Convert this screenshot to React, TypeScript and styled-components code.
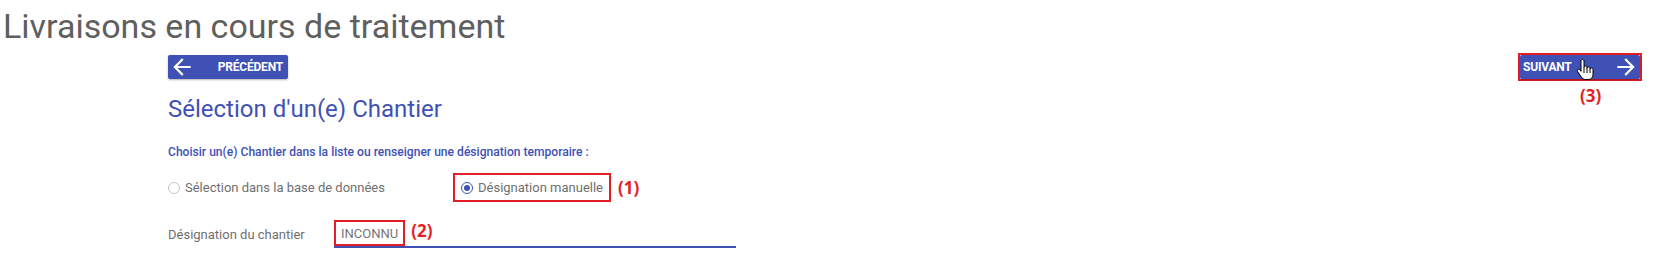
import React from "react"
import styled, { createGlobalStyle } from "styled-components"

const GlobalStyle = createGlobalStyle`
  html, body {
    margin: 0;
    padding: 0;
    background: #ffffff;
    font-family: Roboto, "Liberation Sans", Arial, sans-serif;
  }
`

const INDIGO = "#3f51b5"
const RED = "#e41e26"

const Page = styled.div`
  padding: 6px 26px 0 0;
  width: 1668px;
  box-sizing: border-box;
`

const Title = styled.h1`
  margin: 0;
  padding-left: 3px;
  font-size: 34px;
  line-height: 40px;
  font-weight: 400;
  color: #5f5f5f;
`

const Content = styled.div`
  padding-left: 168px;
  margin-top: 7px;
`

const NavBar = styled.div`
  display: flex;
  align-items: center;
  justify-content: space-between;
  height: 28px;
`

const NavButton = styled.button<{ $reverse?: boolean }>`
  display: flex;
  flex-direction: ${(p) => (p.$reverse ? "row-reverse" : "row")};
  align-items: center;
  justify-content: space-between;
  width: 120px;
  height: 24px;
  padding: ${(p) => (p.$reverse ? "0 1px 0 3px" : "0 5px 0 1px")};
  border: none;
  border-radius: 2px;
  background: ${INDIGO};
  color: #ffffff;
  font-family: Roboto, "Liberation Sans", Arial, sans-serif;
  font-size: 12px;
  font-weight: 700;
  letter-spacing: -0.2px;
  box-shadow: 0 1px 2px rgba(0, 0, 0, 0.3);
  cursor: pointer;

  svg {
    width: 26px;
    height: 26px;
    fill: #ffffff;
  }
`

const HighlightBox = styled.div`
  position: relative;
  display: flex;
  align-items: center;
  border: 2px solid ${RED};
  box-sizing: border-box;
`

const Annotation = styled.span`
  font-family: "Open Sans", "Liberation Sans", Arial, sans-serif;
  font-size: 17px;
  font-weight: 700;
  line-height: 22px;
  color: ${RED};
  white-space: nowrap;
`

const BelowAnnotation = styled(Annotation)`
  position: absolute;
  top: 30px;
  left: 60px;
`

const Cursor = styled.svg`
  position: absolute;
  left: 56px;
  top: 3px;
  width: 19px;
  height: 23px;
`

const SectionTitle = styled.h2`
  margin: 14px 0 0;
  font-size: 24px;
  line-height: 28px;
  font-weight: 400;
  color: ${INDIGO};
`

const Hint = styled.p`
  margin: 21px 0 0;
  font-size: 12.1px;
  line-height: 16px;
  font-weight: 500;
  color: ${INDIGO};
`

const RadioRow = styled.div`
  display: flex;
  align-items: center;
  height: 29px;
  margin-top: 13px;
`

const RadioOption = styled.label<{ $width?: number }>`
  display: flex;
  align-items: center;
  gap: 5px;
  width: ${(p) => (p.$width ? `${p.$width}px` : "auto")};
  font-size: 13px;
  color: #6f6f6f;
  cursor: pointer;
`

const RadioCircle = styled.span<{ $checked?: boolean }>`
  position: relative;
  width: 12px;
  height: 12px;
  box-sizing: border-box;
  border-radius: 50%;
  border: ${(p) => (p.$checked ? `1.5px solid ${INDIGO}` : "1px solid #c4c4c4")};

  &::after {
    content: "";
    display: ${(p) => (p.$checked ? "block" : "none")};
    position: absolute;
    left: 50%;
    top: 50%;
    width: 6px;
    height: 6px;
    margin: -3px 0 0 -3px;
    border-radius: 50%;
    background: ${INDIGO};
  }
`

const AnnotatedGroup = styled.div`
  display: flex;
  align-items: center;
  gap: 7px;
`

const RadioBox = styled(HighlightBox)`
  height: 29px;
  padding: 0 6px 0 6px;
`

const FieldRow = styled.div`
  display: flex;
  align-items: center;
  margin-top: 18px;
`

const FieldLabel = styled.span`
  width: 166px;
  font-size: 13px;
  color: #6f6f6f;
`

const FieldInput = styled.div`
  display: flex;
  align-items: stretch;
  gap: 6px;
  width: 402px;
  height: 28px;
  box-sizing: border-box;
  border-bottom: 2px solid ${INDIGO};
`

const ValueBox = styled(HighlightBox)`
  padding: 0 5px 0 5px;
  font-size: 13px;
  color: #757575;
`

const ArrowBack = () => (
  <svg viewBox="0 0 24 24">
    <path d="M20 11H7.83l5.59-5.59L12 4l-8 8 8 8 1.41-1.41L7.83 13H20v-2z" />
  </svg>
)

const ArrowForward = () => (
  <svg viewBox="0 0 24 24">
    <path d="M4 11h12.17l-5.59-5.59L12 4l8 8-8 8-1.41-1.41L16.17 13H4v-2z" />
  </svg>
)

const HandCursor = () => (
  <Cursor viewBox="0 0 19 23">
    <path
      d="M6.5 1.5C7.3 1.5 8 2.2 8 3V9.5C8 8.7 8.7 8 9.5 8C10.3 8 11 8.7 11 9.5V10.5C11 9.7 11.7 9 12.5 9C13.3 9 14 9.7 14 10.5V11.5C14 10.7 14.7 10 15.5 10C16.3 10 17 10.7 17 11.5V16.5C17 19.5 15.2 21.5 12.2 21.5H9.5C7.6 21.5 6.3 20.6 5.3 19L1.6 13.6C1.1 12.8 1.3 11.9 2 11.5C2.7 11.1 3.6 11.3 4.1 12L5 13.3V3C5 2.2 5.7 1.5 6.5 1.5Z"
      fill="#ffffff"
      stroke="#000000"
      strokeWidth="1"
      strokeLinejoin="round"
    />
    <path d="M8 9.5V15M11 10.5V15M14 11.5V15" stroke="#000000" strokeWidth="1" />
  </Cursor>
)

export default function App() {
  return (
    <Page>
      <GlobalStyle />
      <Title>Livraisons en cours de traitement</Title>
      <Content>
        <NavBar>
          <NavButton>
            <ArrowBack />
            <span>PRÉCÉDENT</span>
          </NavButton>
          <HighlightBox>
            <NavButton $reverse>
              <ArrowForward />
              <span>SUIVANT</span>
            </NavButton>
            <HandCursor />
            <BelowAnnotation>(3)</BelowAnnotation>
          </HighlightBox>
        </NavBar>

        <SectionTitle>Sélection d'un(e) Chantier</SectionTitle>
        <Hint>Choisir un(e) Chantier dans la liste ou renseigner une désignation temporaire :</Hint>

        <RadioRow>
          <RadioOption $width={285}>
            <RadioCircle />
            Sélection dans la base de données
          </RadioOption>
          <AnnotatedGroup>
            <RadioBox>
              <RadioOption>
                <RadioCircle $checked />
                Désignation manuelle
              </RadioOption>
            </RadioBox>
            <Annotation>(1)</Annotation>
          </AnnotatedGroup>
        </RadioRow>

        <FieldRow>
          <FieldLabel>Désignation du chantier</FieldLabel>
          <FieldInput>
            <ValueBox>INCONNU</ValueBox>
            <Annotation>(2)</Annotation>
          </FieldInput>
        </FieldRow>
      </Content>
    </Page>
  )
}
